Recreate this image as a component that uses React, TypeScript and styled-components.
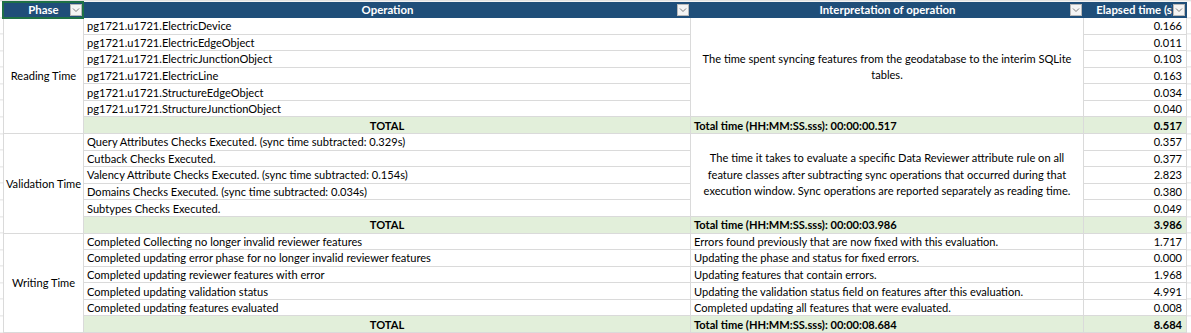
import { Fragment } from "react";
import styled, { createGlobalStyle } from "styled-components";

const ROW = 315 / 19;
const GRID = "#dadada";

const GlobalStyle = createGlobalStyle`
  html, body {
    margin: 0;
    padding: 0;
    background: #ffffff;
  }
  body {
    font-family: Lato, "Open Sans", sans-serif;
    font-size: 11.1px;
    color: #000000;
  }
`;

const Page = styled.div`
  width: 1191px;
  height: 333px;
  box-sizing: border-box;
  padding: 2px 4px 0 3px;
  overflow: hidden;
  background-color: #ffffff;
  background-image: repeating-linear-gradient(
    to bottom,
    #e2e2e2 0 1px,
    transparent 1px ${ROW}px
  );
  background-position: 0 0.4px;
`;

const Sheet = styled.div`
  display: grid;
  grid-template-columns: 81px 607px 393px 103px;
  grid-template-rows: 16px;
  grid-auto-rows: ${ROW}px;
  background: #ffffff;
`;

const HeadCell = styled.div<{ $selected?: boolean }>`
  position: relative;
  background: #1f4e79;
  color: #ffffff;
  font-weight: 700;
  font-size: 11.4px;
  text-align: center;
  line-height: 16px;
  white-space: nowrap;
  overflow: hidden;

  ${(p) =>
    p.$selected &&
    `
    overflow: visible;
    &::after {
      content: "";
      position: absolute;
      top: -1px;
      left: -1px;
      right: 0;
      bottom: -1px;
      border: 2px solid #1e7145;
      pointer-events: none;
    }
  `}
`;

const HeadLabel = styled.div`
  width: 100%;
  clip-path: inset(0 15px 0 0);
`;

const FilterButton = styled.span`
  position: absolute;
  top: 2px;
  right: 2px;
  width: 12px;
  height: 12px;
  box-sizing: border-box;
  background: #f4f4f4;
  border: 1px solid #b8b8b8;
  display: flex;
  align-items: center;
  justify-content: center;
`;

const Cell = styled.div`
  box-sizing: border-box;
  border-right: 1px solid ${GRID};
  border-bottom: 1px solid ${GRID};
  display: flex;
  align-items: center;
  white-space: nowrap;
  overflow: hidden;
`;

const PhaseCell = styled(Cell)<{ $span: number }>`
  grid-column: 1;
  grid-row: span ${(p) => p.$span};
  border-left: 1px solid ${GRID};
  justify-content: center;
`;

const OpCell = styled(Cell)<{ $total?: boolean }>`
  grid-column: 2;
  padding: 0 3px;
  background: ${(p) => (p.$total ? "#e2efda" : "#ffffff")};
  font-weight: ${(p) => (p.$total ? 700 : 400)};
  justify-content: ${(p) => (p.$total ? "center" : "flex-start")};
`;

const InterpCell = styled(Cell)<{ $span?: number; $total?: boolean }>`
  grid-column: 3;
  grid-row: span ${(p) => p.$span ?? 1};
  padding: 0 3px;
  background: ${(p) => (p.$total ? "#e2efda" : "#ffffff")};
  font-weight: ${(p) => (p.$total ? 700 : 400)};
`;

const MergedText = styled.div`
  width: 100%;
  text-align: center;
  line-height: ${ROW}px;
`;

const TimeCell = styled(Cell)<{ $total?: boolean }>`
  grid-column: 4;
  padding: 0 4px;
  justify-content: flex-end;
  background: ${(p) => (p.$total ? "#e2efda" : "#ffffff")};
  font-weight: ${(p) => (p.$total ? 700 : 400)};
`;

function Chevron() {
  return (
    <svg width="8" height="6" viewBox="0 0 8 6">
      <polyline points="1,1.5 4,4.5 7,1.5" fill="none" stroke="#7a7a7a" strokeWidth="1" />
    </svg>
  );
}

interface Row {
  op: string;
  time: string;
  note?: string;
}

interface Group {
  phase: string;
  mergedNote?: string[];
  rows: Row[];
  totalText: string;
  total: string;
}

const groups: Group[] = [
  {
    phase: "Reading Time",
    mergedNote: [
      "The time spent syncing features from the geodatabase to the interim SQLite",
      "tables.",
    ],
    rows: [
      { op: "pg1721.u1721.ElectricDevice", time: "0.166" },
      { op: "pg1721.u1721.ElectricEdgeObject", time: "0.011" },
      { op: "pg1721.u1721.ElectricJunctionObject", time: "0.103" },
      { op: "pg1721.u1721.ElectricLine", time: "0.163" },
      { op: "pg1721.u1721.StructureEdgeObject", time: "0.034" },
      { op: "pg1721.u1721.StructureJunctionObject", time: "0.040" },
    ],
    totalText: "Total time (HH:MM:SS.sss): 00:00:00.517",
    total: "0.517",
  },
  {
    phase: "Validation Time",
    mergedNote: [
      "The time it takes to evaluate a specific Data Reviewer attribute rule on all",
      "feature classes after subtracting sync operations that occurred during that",
      "execution window. Sync operations are reported separately as reading time.",
    ],
    rows: [
      { op: "Query Attributes Checks Executed. (sync time subtracted: 0.329s)", time: "0.357" },
      { op: "Cutback Checks Executed.", time: "0.377" },
      { op: "Valency Attribute Checks Executed. (sync time subtracted: 0.154s)", time: "2.823" },
      { op: "Domains Checks Executed. (sync time subtracted: 0.034s)", time: "0.380" },
      { op: "Subtypes Checks Executed.", time: "0.049" },
    ],
    totalText: "Total time (HH:MM:SS.sss): 00:00:03.986",
    total: "3.986",
  },
  {
    phase: "Writing Time",
    rows: [
      {
        op: "Completed Collecting no longer invalid reviewer features",
        note: "Errors found previously that are now fixed with this evaluation.",
        time: "1.717",
      },
      {
        op: "Completed updating error phase for no longer invalid reviewer features",
        note: "Updating the phase and status for fixed errors.",
        time: "0.000",
      },
      {
        op: "Completed updating reviewer features with error",
        note: "Updating features that contain errors.",
        time: "1.968",
      },
      {
        op: "Completed updating validation status",
        note: "Updating the validation status field on features after this evaluation.",
        time: "4.991",
      },
      {
        op: "Completed updating features evaluated",
        note: "Completed updating all features that were evaluated.",
        time: "0.008",
      },
    ],
    totalText: "Total time (HH:MM:SS.sss): 00:00:08.684",
    total: "8.684",
  },
];

const headers = ["Phase", "Operation", "Interpretation of operation", "Elapsed time (s)"];

export default function App() {
  return (
    <>
      <GlobalStyle />
      <Page>
        <Sheet>
          {headers.map((h, i) => (
            <HeadCell key={h} $selected={i === 0}>
              <HeadLabel>{h}</HeadLabel>
              <FilterButton>
                <Chevron />
              </FilterButton>
            </HeadCell>
          ))}

          {groups.map((g) => (
            <Fragment key={g.phase}>
              {g.rows.map((r, i) => (
                <Fragment key={r.op}>
                  {i === 0 ? <PhaseCell $span={g.rows.length + 1}>{g.phase}</PhaseCell> : null}
                  <OpCell>{r.op}</OpCell>
                  {g.mergedNote ? (
                    i === 0 ? (
                      <InterpCell $span={g.rows.length}>
                        <MergedText>
                          {g.mergedNote.map((line) => (
                            <div key={line}>{line}</div>
                          ))}
                        </MergedText>
                      </InterpCell>
                    ) : null
                  ) : (
                    <InterpCell>{r.note}</InterpCell>
                  )}
                  <TimeCell>{r.time}</TimeCell>
                </Fragment>
              ))}
              <OpCell $total>TOTAL</OpCell>
              <InterpCell $total>{g.totalText}</InterpCell>
              <TimeCell $total>{g.total}</TimeCell>
            </Fragment>
          ))}
        </Sheet>
      </Page>
    </>
  );
}
